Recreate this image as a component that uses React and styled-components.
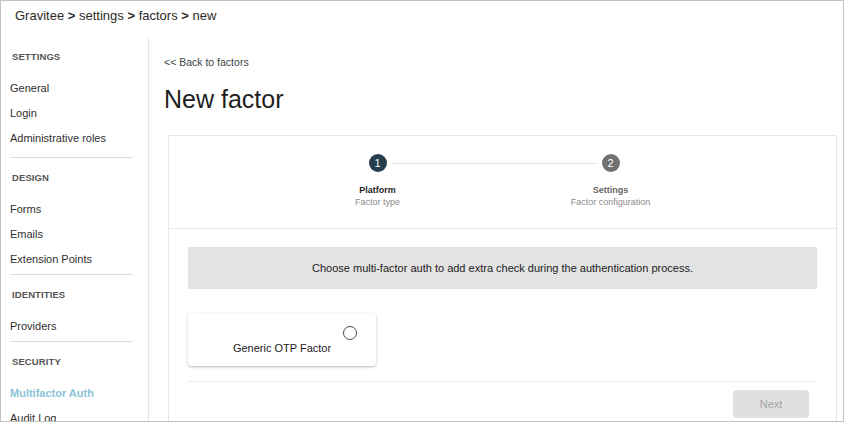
import React from 'react';
import styled, { createGlobalStyle } from 'styled-components';

const GlobalStyle = createGlobalStyle`
  html, body {
    margin: 0;
    padding: 0;
    background: #ffffff;
  }
  * {
    box-sizing: border-box;
  }
  body {
    font-family: "Liberation Sans", Arial, Helvetica, sans-serif;
    color: #222;
  }
`;

const Frame = styled.div`
  width: 844px;
  height: 422px;
  border: 1px solid #c2c2c2;
  overflow: hidden;
  display: flex;
  flex-direction: column;
  background: #fff;
`;

const Header = styled.div`
  height: 37px;
  flex-shrink: 0;
  padding-left: 14px;
  line-height: 30px;
  font-size: 13px;
  color: #2b2b2b;
  white-space: pre;
`;

const Sep = styled.span`
  font-weight: bold;
`;

const Body = styled.div`
  flex: 1;
  display: flex;
  min-height: 0;
`;

const Sidebar = styled.nav`
  width: 148px;
  flex-shrink: 0;
  border-right: 1px solid #e4e4e4;
  padding-top: 12px;
`;

const SectionTitle = styled.div`
  height: 14px;
  line-height: 14px;
  padding-left: 11px;
  font-size: 9.5px;
  font-weight: bold;
  color: #555;
  text-transform: uppercase;
  letter-spacing: 0.1px;
  margin-bottom: 12px;
  margin-top: ${p => (p.$first ? 0 : 13)}px;
`;

const NavItem = styled.div`
  height: 25px;
  line-height: 25px;
  padding-left: 9px;
  font-size: 11px;
  color: ${p => (p.$active ? '#8cc3d7' : '#2f2f2f')};
  font-weight: ${p => (p.$active ? 'bold' : 'normal')};
  white-space: nowrap;
`;

const NavDivider = styled.div`
  height: 1px;
  background: #dcdcdc;
  margin: ${p => (p.$wide ? 6 : 2)}px 15px 0 9px;
`;

const Main = styled.main`
  flex: 1;
  padding: 17px 6px 0 15px;
  min-width: 0;
`;

const BackLink = styled.div`
  font-size: 10.5px;
  line-height: 14px;
  color: #3a3f44;
`;

const Title = styled.h1`
  margin: 15px 0 0 0;
  font-size: 25px;
  line-height: 30px;
  font-weight: normal;
  color: #1e1e1e;
`;

const Card = styled.div`
  margin: 21px 0 0 4px;
  border: 1px solid #e6e6e6;
  background: #fff;
`;

const Stepper = styled.div`
  display: flex;
  justify-content: center;
  padding: 18px 17px 20px 0;
  border-bottom: 1px solid #e8e8e8;
`;

const Step = styled.div`
  width: 130px;
  display: flex;
  flex-direction: column;
  align-items: center;
  position: relative;
  z-index: 1;
`;

const StepCircle = styled.div`
  width: 18px;
  height: 18px;
  border-radius: 50%;
  background: ${p => (p.$active ? '#263e4e' : '#717171')};
  color: #fff;
  font-size: 11px;
  line-height: 18px;
  text-align: center;
`;

const StepLabel = styled.div`
  margin-top: 12px;
  font-size: 9px;
  line-height: 12px;
  font-weight: bold;
  color: ${p => (p.$active ? '#1f1f1f' : '#666')};
`;

const StepSub = styled.div`
  font-size: 9px;
  line-height: 12px;
  color: #8a8a8a;
  white-space: nowrap;
`;

const Connector = styled.div`
  width: 205px;
  flex-shrink: 0;
  height: 1px;
  background: #e2e2e2;
  margin: 9px -51px 0;
`;

const Content = styled.div`
  padding: 18px 19px 30px 19px;
`;

const Banner = styled.div`
  height: 42px;
  background: #e3e3e3;
  display: flex;
  align-items: center;
  justify-content: center;
  font-size: 11px;
  color: #222;
`;

const Options = styled.div`
  display: flex;
  margin-top: 24px;
`;

const OptionCard = styled.div`
  width: 188px;
  height: 53px;
  border-radius: 3px;
  background: #fff;
  box-shadow: 0 1px 3px rgba(0, 0, 0, 0.2), 0 1px 1px rgba(0, 0, 0, 0.08);
  display: flex;
  flex-direction: column;
  padding: 13px 19px 0 0;
`;

const Radio = styled.div`
  align-self: flex-end;
  width: 14px;
  height: 14px;
  border-radius: 50%;
  border: 1.5px solid #4a4a4a;
`;

const OptionName = styled.div`
  margin-top: 1px;
  padding-left: 19px;
  text-align: center;
  font-size: 11px;
  line-height: 14px;
  color: #222;
`;

const Footer = styled.div`
  margin-top: 15px;
  border-top: 1px solid #ececec;
  display: flex;
  justify-content: flex-end;
  padding: 8px 8px 0 0;
`;

const NextButton = styled.button`
  width: 76px;
  height: 28px;
  border: none;
  border-radius: 4px;
  background: #e0e0e0;
  color: #a3a3a3;
  font-family: inherit;
  font-size: 11px;
  font-weight: 500;
`;

const sections = [
  { title: 'Settings', items: ['General', 'Login', 'Administrative roles'] },
  { title: 'Design', items: ['Forms', 'Emails', 'Extension Points'] },
  { title: 'Identities', items: ['Providers'] },
  { title: 'Security', items: ['Multifactor Auth', 'Audit Log'], active: 'Multifactor Auth' }
];

const crumbs = ['Gravitee', 'settings', 'factors', 'new'];

export default function App() {
  return (
    <>
      <GlobalStyle />
      <Frame>
        <Header>
          {crumbs.map((c, i) => (
            <React.Fragment key={c}>
              {i > 0 && <> <Sep>&gt;</Sep> </>}
              {c}
            </React.Fragment>
          ))}
        </Header>
        <Body>
          <Sidebar>
            {sections.map((s, i) => (
              <React.Fragment key={s.title}>
                {i > 0 && <NavDivider $wide={i === 1} />}
                <SectionTitle $first={i === 0}>{s.title}</SectionTitle>
                {s.items.map(item => (
                  <NavItem key={item} $active={item === s.active}>{item}</NavItem>
                ))}
              </React.Fragment>
            ))}
          </Sidebar>
          <Main>
            <BackLink>&lt;&lt; Back to factors</BackLink>
            <Title>New factor</Title>
            <Card>
              <Stepper>
                <Step>
                  <StepCircle $active>1</StepCircle>
                  <StepLabel $active>Platform</StepLabel>
                  <StepSub>Factor type</StepSub>
                </Step>
                <Connector />
                <Step>
                  <StepCircle>2</StepCircle>
                  <StepLabel>Settings</StepLabel>
                  <StepSub>Factor configuration</StepSub>
                </Step>
              </Stepper>
              <Content>
                <Banner>Choose multi-factor auth to add extra check during the authentication process.</Banner>
                <Options>
                  <OptionCard>
                    <Radio />
                    <OptionName>Generic OTP Factor</OptionName>
                  </OptionCard>
                </Options>
                <Footer>
                  <NextButton disabled>Next</NextButton>
                </Footer>
              </Content>
            </Card>
          </Main>
        </Body>
      </Frame>
    </>
  );
}
